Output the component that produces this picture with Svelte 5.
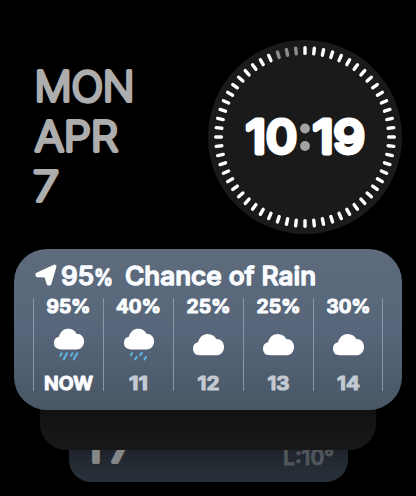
<script lang="ts">
  interface Hour {
    chance: string;
    label: string;
    rain: "heavy" | "light" | null;
    chanceWidth: number;
    labelWidth: number;
  }

  const date = [
    { text: "MON", x: 34.5, width: 100 },
    { text: "APR", x: 35, width: 83 },
    { text: "7", x: 33, width: 26 },
  ];

  const hours: Hour[] = [
    { chance: "95%", label: "NOW", rain: "heavy", chanceWidth: 44, labelWidth: 49 },
    { chance: "40%", label: "11", rain: "light", chanceWidth: 45, labelWidth: 19 },
    { chance: "25%", label: "12", rain: null, chanceWidth: 44, labelWidth: 22 },
    { chance: "25%", label: "13", rain: null, chanceWidth: 44, labelWidth: 22 },
    { chance: "30%", label: "14", rain: null, chanceWidth: 44, labelWidth: 23 },
  ];

  const ticks = Array.from({ length: 60 }, (_, i) => ({ angle: i * 6, dim: i >= 57 }));
</script>

<main class="face">
  <section class="top">
    <div class="date">
      {#each date as line (line.text)}
        <svg width="150" height="50">
          <text x={line.x} y="34.2" textLength={line.width} lengthAdjust="spacingAndGlyphs">{line.text}</text>
        </svg>
      {/each}
    </div>

    <svg class="clock" width="194" height="194" viewBox="-97 -97 194 194">
      <circle class="dial" r="97" />
      {#each ticks as tick (tick.angle)}
        <line class="tick" class:dim={tick.dim} y1="-89.3" y2="-83.6" transform={`rotate(${tick.angle})`} />
      {/each}
      <text class="time" x="-59" y="16.4" textLength="51" lengthAdjust="spacingAndGlyphs">10</text>
      <circle class="dot" cy="-8.5" r="4.9" />
      <circle class="dot" cy="9" r="4.9" />
      <text class="time" x="8" y="16.4" textLength="52" lengthAdjust="spacingAndGlyphs">19</text>
    </svg>
  </section>

  <section class="stack">
    <div class="card weather">
      <svg class="heading" width="388" height="46">
        <path class="arrow" d="M40.6 17.4 23.2 25.4 23.4 26.4 32 26.8 34.4 34.8 35.6 34.8Z" />
        <text class="title" x="47" y="36" textLength="33" lengthAdjust="spacingAndGlyphs">95</text>
        <text class="title small" x="80" y="36" textLength="19" lengthAdjust="spacingAndGlyphs">%</text>
        <text class="title" x="111" y="36" textLength="191" lengthAdjust="spacingAndGlyphs">Chance of Rain</text>
      </svg>

      <div class="hours">
        {#each hours as hour}
          <div class="hour">
            <svg width="69" height="21">
              <text
                class="strong"
                x={34.5 - hour.chanceWidth / 2}
                y="14.6"
                textLength={hour.chanceWidth}
                lengthAdjust="spacingAndGlyphs">{hour.chance}</text
              >
            </svg>
            <div class="sky" class:wet={hour.rain}>
              <svg viewBox="0 0 34 38">
                <path
                  class="cloud"
                  d="M8.2 26Q1 25.6 1 19.2 1 13.8 6.2 12.6C7.8 6.8 11.6 4 16.2 4 20.6 4 23.6 6.2 25 9.2 30 9.2 33 12.7 33 17.2 33 22.4 29.6 26 24.8 26Z"
                />
                {#if hour.rain === "heavy"}
                  <path class="drops" d="M9.2 30 7.8 32.6M14.9 30 11.4 36.4M20.6 30 19 32.6M25.8 30 22 36.4" />
                {:else if hour.rain === "light"}
                  <path class="drops" d="M9.6 30 8.4 32M14.6 34 13 36.4M20 29.6 18.4 32M24.6 33.8 22.8 36.6" />
                {/if}
              </svg>
            </div>
            <svg width="69" height="27">
              <text
                class="strong"
                class:later={hour.label !== "NOW"}
                x={34.5 - hour.labelWidth / 2}
                y="25.8"
                textLength={hour.labelWidth}
                lengthAdjust="spacingAndGlyphs">{hour.label}</text
              >
            </svg>
          </div>
        {/each}
      </div>
    </div>

    <div class="card middle"></div>

    <div class="card back">
      <svg width="279" height="59">
        <text class="day" x="16 40" y="37.5">17</text>
        <text class="low" x="214" y="41" textLength="51" lengthAdjust="spacingAndGlyphs">L:10°</text>
      </svg>
    </div>
  </section>
</main>

<style>
  :global(body) {
    background: #000;
  }

  .face {
    width: 416px;
    height: 496px;
    overflow: hidden;
    background: #000;
    font-family: Inter, "Liberation Sans", sans-serif;
  }

  svg {
    display: block;
    flex: none;
    overflow: visible;
  }

  text {
    stroke-linejoin: round;
    stroke-linecap: round;
  }

  .top {
    display: flex;
    justify-content: space-between;
    box-sizing: border-box;
    height: 249px;
    padding: 40px 14px 0 0;
  }

  .date {
    padding-top: 27px;
    font-size: 40.5px;
    font-weight: 200;
    fill: #adadad;
    stroke: #adadad;
    stroke-width: 4;
  }

  .dial {
    fill: #1a1a1a;
  }

  .tick {
    stroke: #fff;
    stroke-width: 3.4;
    stroke-linecap: round;
  }

  .tick.dim {
    stroke: #8b8b8b;
  }

  .time {
    font-size: 45.5px;
    font-weight: 400;
    fill: #fff;
    stroke: #fff;
    stroke-width: 4.8;
  }

  .dot {
    fill: #a3a3a3;
  }

  .stack {
    display: flex;
    flex-direction: column;
    align-items: center;
  }

  .card {
    position: relative;
    box-sizing: border-box;
  }

  .weather {
    z-index: 3;
    width: 388px;
    height: 161px;
    border-radius: 33px;
    background: linear-gradient(180deg, #5d6b7c 0%, #57667a 50%, #485665 100%);
  }

  .heading {
    margin-bottom: 3px;
  }

  .arrow {
    fill: #fff;
    stroke: #fff;
    stroke-width: 3.6;
    stroke-linejoin: round;
  }

  .title {
    font-size: 25px;
    font-weight: 500;
    fill: #f8fbff;
    stroke: #f8fbff;
    stroke-width: 1.4;
  }

  .title.small {
    font-size: 21px;
  }

  .hours {
    display: flex;
    height: 93px;
    margin: 0 19px;
    border-right: 1px solid #8996a5;
  }

  .hour {
    flex: 1;
    display: flex;
    flex-direction: column;
    align-items: center;
    border-left: 1px solid #8996a5;
  }

  .strong {
    font-size: 18.5px;
    font-weight: 600;
    fill: #fbfdff;
    stroke: #fbfdff;
    stroke-width: 1.2;
  }

  .strong.later {
    fill: #c3cad2;
    stroke: #c3cad2;
  }

  .sky {
    box-sizing: border-box;
    width: 34px;
    height: 45px;
    padding: 11px 1px 0 0;
  }

  .sky.wet {
    width: 32px;
    padding: 6px 0 0;
  }

  .cloud {
    fill: #fff;
  }

  .drops {
    fill: none;
    stroke: #61b5e2;
    stroke-width: 2.2;
    stroke-linecap: round;
  }

  .middle {
    z-index: 2;
    width: 336px;
    height: 65px;
    margin-top: -25px;
    border-radius: 0 0 27px 27px;
    background: linear-gradient(180deg, #111 35%, #181818 100%);
    box-shadow: inset 0 -1px 1px #1c1c1c;
  }

  .back {
    width: 279px;
    height: 58px;
    margin-top: -26px;
    border-radius: 0 0 22px 22px;
    background: linear-gradient(180deg, #1f242b 45%, #29323b 100%);
  }

  .day {
    font-size: 40px;
    font-weight: 400;
    fill: #858687;
    stroke: #858687;
    stroke-width: 4;
  }

  .low {
    font-size: 21px;
    font-weight: 600;
    fill: #50565c;
    stroke: #50565c;
    stroke-width: 0.8;
  }
</style>
